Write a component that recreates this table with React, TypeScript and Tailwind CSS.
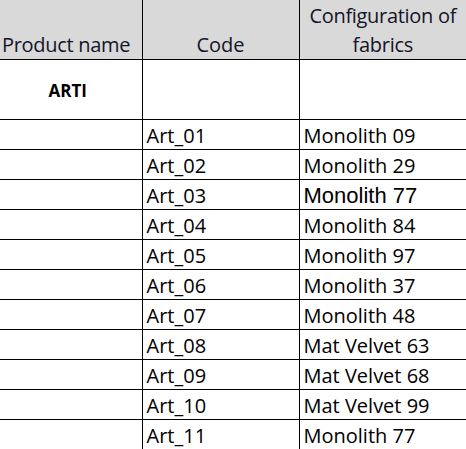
const rows: { code: string; fabric: string; arial?: boolean }[] = [
  { code: "Art_01", fabric: "Monolith 09" },
  { code: "Art_02", fabric: "Monolith 29" },
  { code: "Art_03", fabric: "Monolith 77", arial: true },
  { code: "Art_04", fabric: "Monolith 84" },
  { code: "Art_05", fabric: "Monolith 97" },
  { code: "Art_06", fabric: "Monolith 37" },
  { code: "Art_07", fabric: "Monolith 48" },
  { code: "Art_08", fabric: "Mat Velvet 63" },
  { code: "Art_09", fabric: "Mat Velvet 68" },
  { code: "Art_10", fabric: "Mat Velvet 99" },
  { code: "Art_11", fabric: "Monolith 77" },
];

export default function App() {
  return (
    <div className="w-[466px] h-[449px] overflow-hidden bg-white font-['Open_Sans',sans-serif] text-[20px] text-black">
      <table className="border-collapse table-fixed w-[466px]">
        <colgroup>
          <col className="w-[142px]" />
          <col className="w-[157px]" />
          <col className="w-[167px]" />
        </colgroup>
        <thead>
          <tr className="h-[59px] bg-[#d9d9d9] text-[#141428]">
            <th className="border-r border-b border-black align-bottom text-left font-normal pl-[2px] pb-0 leading-[29px] whitespace-nowrap tracking-[-0.3px]">
              Product name
            </th>
            <th className="border-r border-b border-black align-bottom text-center font-normal pb-0 leading-[29px]">
              Code
            </th>
            <th className="border-b border-black align-bottom text-center font-normal pb-0 leading-[29px] tracking-[-0.3px]">
              Configuration of fabrics
            </th>
          </tr>
        </thead>
        <tbody>
          <tr className="h-[60px]">
            <td className="border-r border-b border-black text-center font-bold text-[17px] pr-[6px] pt-[3px]">ARTI</td>
            <td className="border-r border-b border-black"></td>
            <td className="border-b border-black"></td>
          </tr>
          {rows.map((r) => (
            <tr key={r.code} className="h-[30px]">
              <td className="border-r border-b border-black"></td>
              <td className="border-r border-b border-black align-bottom pl-[4px] leading-[26px]">{r.code}</td>
              <td
                className={
                  r.arial
                    ? "border-b border-black align-bottom pl-[4px] leading-[26px] font-['Liberation_Sans',sans-serif] text-[22px]"
                    : "border-b border-black align-bottom pl-[4px] leading-[26px]"
                }
              >
                {r.fabric}
              </td>
            </tr>
          ))}
        </tbody>
      </table>
    </div>
  );
}
